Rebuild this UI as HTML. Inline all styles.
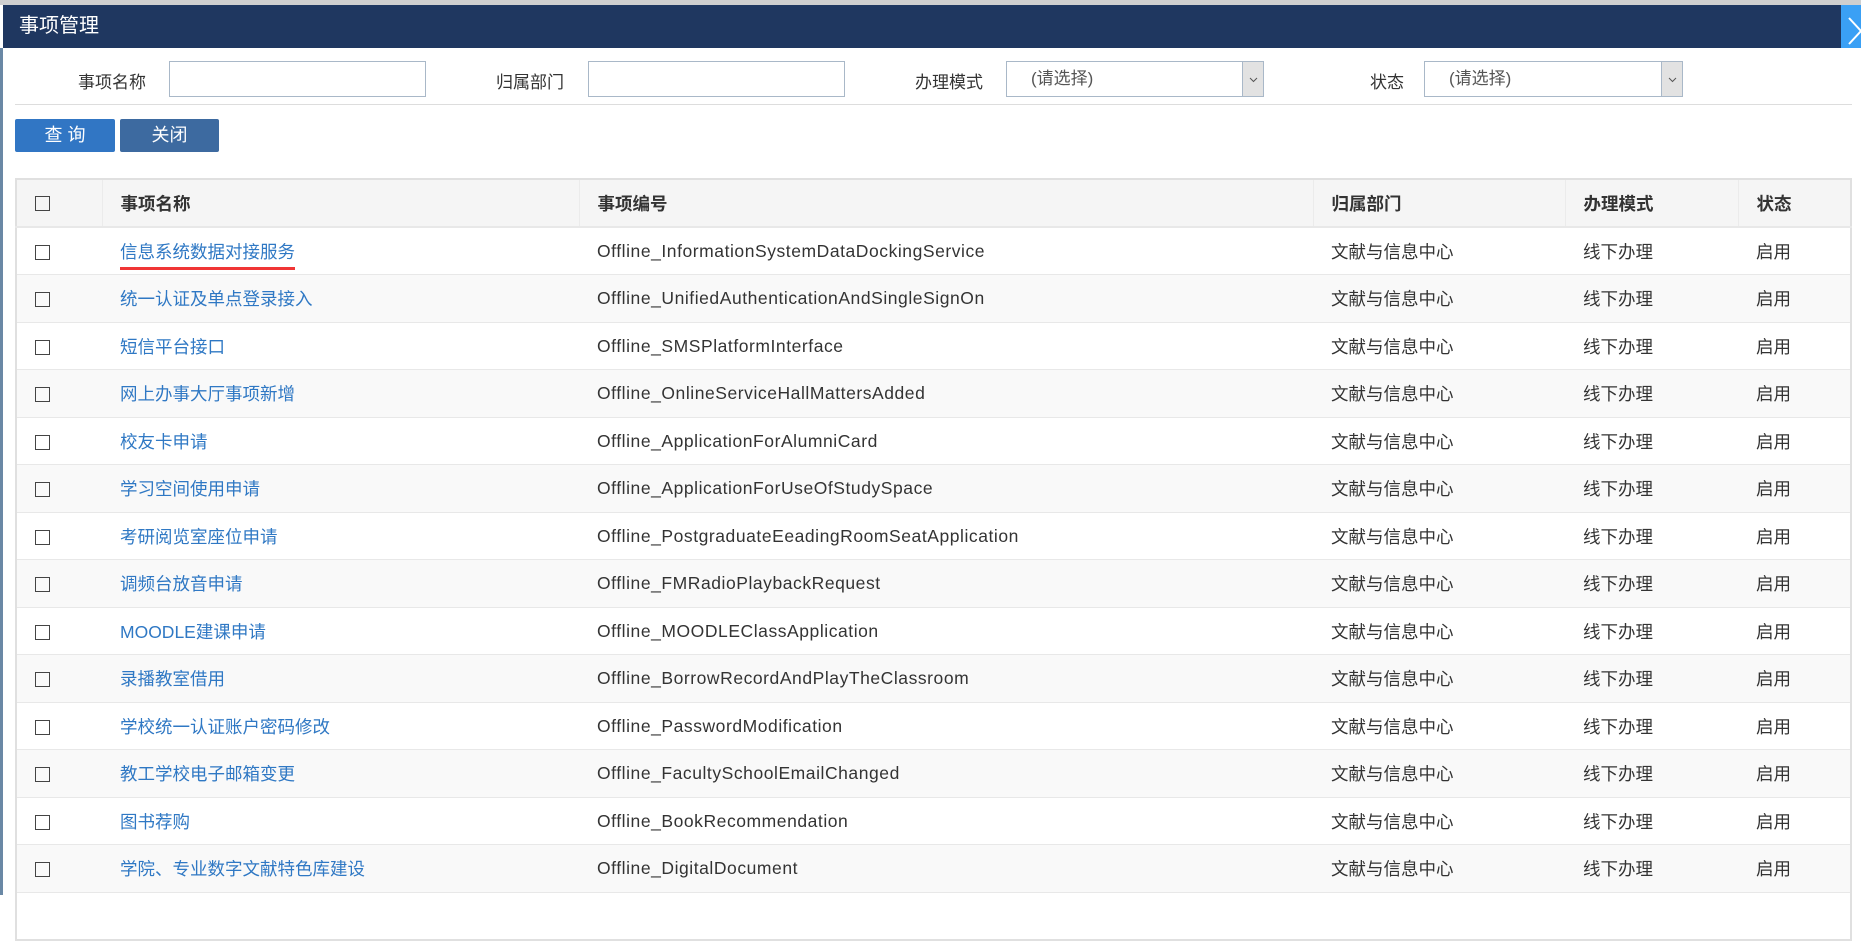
<!DOCTYPE html>
<html><head><meta charset="utf-8"><style>
*{margin:0;padding:0;box-sizing:border-box}
body{width:1861px;height:895px;overflow:hidden;background:#fff;font-family:"Liberation Sans","Noto Sans CJK SC",sans-serif;position:relative;color:#333}
.abs{position:absolute}
.top{left:0;top:0;width:1861px;height:5px;background:#cfcfcf}
.leftbar{left:0;top:48px;width:3px;height:847px;background:#6a88a5}
.title{left:3px;top:5px;width:1838px;height:43px;background:#1f3760;color:#fff;font-size:20px;line-height:43px;padding-left:16px}
.close{left:1841px;top:5px;width:20px;height:43px;background:#3aa0f5}
.lbl{font-size:17px;top:68px;color:#333}
.inp{top:61px;height:36px;border:1px solid #a9b8c8;background:#fff}
.sel{top:61px;height:36px;border:1px solid #a9b8c8;background:#fff;font-size:17px;line-height:34px;padding-left:24px;color:#555}
.sel i{position:absolute;right:0;top:0;width:21px;height:34px;background:#e2e2e2;border-left:1px solid #a9b8c8}
.sep{left:15px;top:104px;width:1837px;height:1px;background:#ddd}
.btn{top:119px;height:33px;color:#fff;font-size:18px;line-height:33px;text-align:center;border-radius:2px}
table{position:absolute;left:15px;top:178px;width:1837px;border-collapse:collapse;border:2px solid #e0e0e0;font-size:17.5px}
th{background:#f5f5f5;height:48px;text-align:left;font-weight:bold;border-bottom:2px solid #e8e8e8;border-left:1px solid #ebebeb;padding-left:18px}
td{height:47.5px;border-bottom:1px solid #e8e8e8;padding-left:18px;white-space:nowrap;padding-top:1px}
td:nth-child(3){letter-spacing:0.55px}
tr:nth-child(odd) td{background:#f9f9f9}
th:first-child{border-left:none}
.cb{display:inline-block;width:15px;height:15px;border:1.5px solid #444;vertical-align:middle;margin-left:0}
a{color:#2f78c4;text-decoration:none}
</style></head><body>
<div class="abs top"></div>
<div class="abs leftbar"></div>
<div class="abs title">事项管理</div>
<div class="abs close"><svg width="20" height="43"><path d="M8 13 L20 26 M8 39 L20 26" stroke="#fff" stroke-width="2" fill="none"/></svg></div>
<div class="abs lbl" style="left:78px">事项名称</div>
<div class="abs inp" style="left:169px;width:257px"></div>
<div class="abs lbl" style="left:496px">归属部门</div>
<div class="abs inp" style="left:588px;width:257px"></div>
<div class="abs lbl" style="left:915px">办理模式</div>
<div class="abs sel" style="left:1006px;width:258px">(请选择)<i><svg width="21" height="34"><path d="M7 16 L10.5 19.5 L14 16" stroke="#555" stroke-width="1" fill="none"/></svg></i></div>
<div class="abs lbl" style="left:1370px">状态</div>
<div class="abs sel" style="left:1424px;width:259px">(请选择)<i><svg width="21" height="34"><path d="M7 16 L10.5 19.5 L14 16" stroke="#555" stroke-width="1" fill="none"/></svg></i></div>
<div class="abs sep"></div>
<div class="abs btn" style="left:15px;width:100px;background:#3176c4">查 询</div>
<div class="abs btn" style="left:120px;width:99px;background:#3d6aa0">关闭</div>
<table>
<colgroup><col style="width:86px"><col style="width:477px"><col style="width:734px"><col style="width:252px"><col style="width:173px"><col></colgroup>
<tr><th><span class="cb"></span></th><th>事项名称</th><th>事项编号</th><th>归属部门</th><th>办理模式</th><th>状态</th></tr>
<tr><td><span class="cb"></span></td><td><a style="border-bottom:3px solid #f03535;padding-bottom:5px">信息系统数据对接服务</a></td><td>Offline_InformationSystemDataDockingService</td><td>文献与信息中心</td><td>线下办理</td><td>启用</td></tr>
<tr><td><span class="cb"></span></td><td><a>统一认证及单点登录接入</a></td><td>Offline_UnifiedAuthenticationAndSingleSignOn</td><td>文献与信息中心</td><td>线下办理</td><td>启用</td></tr>
<tr><td><span class="cb"></span></td><td><a>短信平台接口</a></td><td>Offline_SMSPlatformInterface</td><td>文献与信息中心</td><td>线下办理</td><td>启用</td></tr>
<tr><td><span class="cb"></span></td><td><a>网上办事大厅事项新增</a></td><td>Offline_OnlineServiceHallMattersAdded</td><td>文献与信息中心</td><td>线下办理</td><td>启用</td></tr>
<tr><td><span class="cb"></span></td><td><a>校友卡申请</a></td><td>Offline_ApplicationForAlumniCard</td><td>文献与信息中心</td><td>线下办理</td><td>启用</td></tr>
<tr><td><span class="cb"></span></td><td><a>学习空间使用申请</a></td><td>Offline_ApplicationForUseOfStudySpace</td><td>文献与信息中心</td><td>线下办理</td><td>启用</td></tr>
<tr><td><span class="cb"></span></td><td><a>考研阅览室座位申请</a></td><td>Offline_PostgraduateEeadingRoomSeatApplication</td><td>文献与信息中心</td><td>线下办理</td><td>启用</td></tr>
<tr><td><span class="cb"></span></td><td><a>调频台放音申请</a></td><td>Offline_FMRadioPlaybackRequest</td><td>文献与信息中心</td><td>线下办理</td><td>启用</td></tr>
<tr><td><span class="cb"></span></td><td><a>MOODLE建课申请</a></td><td>Offline_MOODLEClassApplication</td><td>文献与信息中心</td><td>线下办理</td><td>启用</td></tr>
<tr><td><span class="cb"></span></td><td><a>录播教室借用</a></td><td>Offline_BorrowRecordAndPlayTheClassroom</td><td>文献与信息中心</td><td>线下办理</td><td>启用</td></tr>
<tr><td><span class="cb"></span></td><td><a>学校统一认证账户密码修改</a></td><td>Offline_PasswordModification</td><td>文献与信息中心</td><td>线下办理</td><td>启用</td></tr>
<tr><td><span class="cb"></span></td><td><a>教工学校电子邮箱变更</a></td><td>Offline_FacultySchoolEmailChanged</td><td>文献与信息中心</td><td>线下办理</td><td>启用</td></tr>
<tr><td><span class="cb"></span></td><td><a>图书荐购</a></td><td>Offline_BookRecommendation</td><td>文献与信息中心</td><td>线下办理</td><td>启用</td></tr>
<tr><td><span class="cb"></span></td><td><a>学院、专业数字文献特色库建设</a></td><td>Offline_DigitalDocument</td><td>文献与信息中心</td><td>线下办理</td><td>启用</td></tr>
<tr><td>&nbsp;</td><td></td><td></td><td></td><td></td><td></td></tr>
</table>
</body></html>
